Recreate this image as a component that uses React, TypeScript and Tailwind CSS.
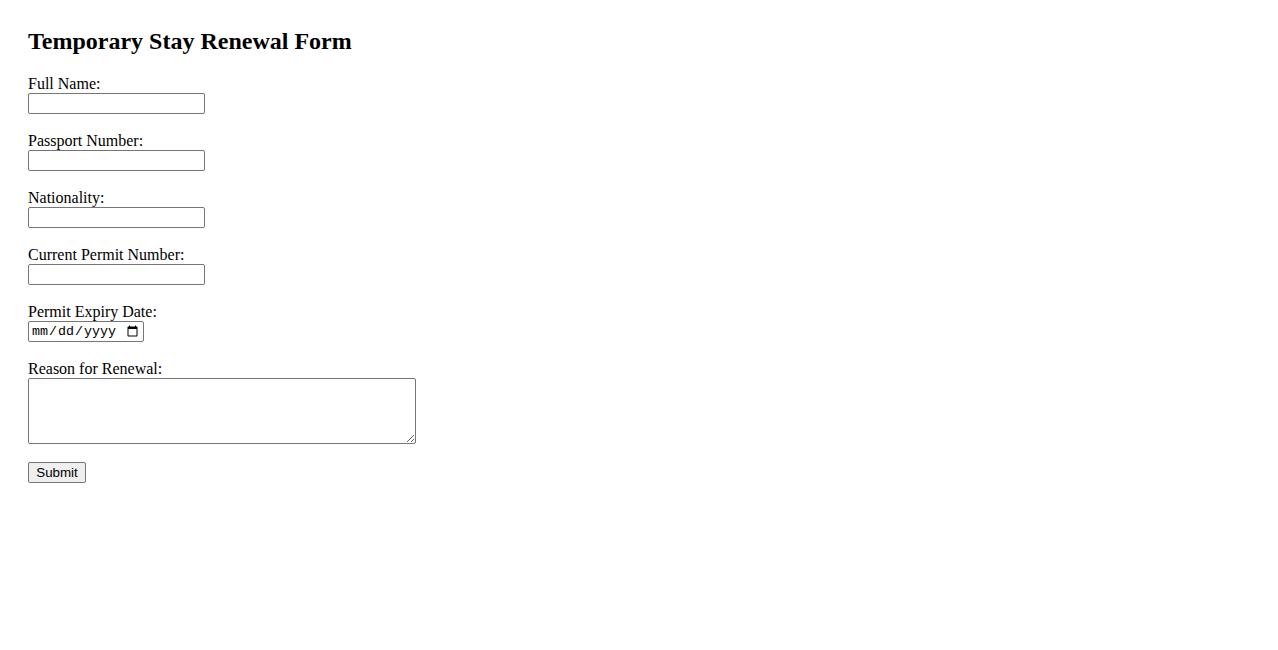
import React, { useState } from "react";

// Plain renewal form, browser-default look
const fields = [
  { id: "fullName", label: "Full Name:" },
  { id: "passport", label: "Passport Number:" },
  { id: "nationality", label: "Nationality:" },
  { id: "permitNumber", label: "Current Permit Number:" },
];

const inputCls =
  "block w-[177px] h-[21px] px-[2px] py-[1px] border border-[#767676] rounded-[2px] bg-white text-[13.33px] text-black [font-family:'Liberation_Sans',Arial,sans-serif] outline-none focus:outline-2 focus:outline-black";

export default function App() {
  const [values, setValues] = useState<Record<string, string>>({});
  const [expiry, setExpiry] = useState("");
  const [reason, setReason] = useState("");

  const update = (id: string, v: string) => setValues((prev) => ({ ...prev, [id]: v }));

  return (
    <div className="min-h-screen bg-white px-[28px] pt-[28px] text-black [font-family:'Liberation_Serif','Times_New_Roman',serif]">
      <h2 className="text-[24px] font-bold leading-[27px]">Temporary Stay Renewal Form</h2>

      <form className="mt-[19px] flex flex-col" onSubmit={(e) => e.preventDefault()}>
        {fields.map((f) => (
          <div key={f.id} className="mb-[17px]">
            <label htmlFor={f.id} className="block text-[16px] leading-[19px]">
              {f.label}
            </label>
            <input
              id={f.id}
              type="text"
              className={inputCls}
              value={values[f.id] ?? ""}
              onChange={(e) => update(f.id, e.target.value)}
            />
          </div>
        ))}

        {/* Expiry date */}
        <div className="mb-[17px]">
          <label htmlFor="expiry" className="block text-[16px] leading-[19px]">
            Permit Expiry Date:
          </label>
          <input
            id="expiry"
            type="date"
            className="block w-[116px] h-[21px] px-[2px] py-0 border border-[#767676] rounded-[2px] bg-white text-[13.33px] text-black [font-family:'Liberation_Mono','Courier_New',monospace] outline-none"
            value={expiry}
            onChange={(e) => setExpiry(e.target.value)}
          />
        </div>

        {/* Reason */}
        <div className="mb-[18px]">
          <label htmlFor="reason" className="block text-[16px] leading-[19px]">
            Reason for Renewal:
          </label>
          <textarea
            id="reason"
            className="block w-[388px] h-[66px] p-[2px] border border-[#767676] rounded-[2px] bg-white text-[13.33px] text-black [font-family:'Liberation_Mono',monospace] outline-none"
            value={reason}
            onChange={(e) => setReason(e.target.value)}
          />
        </div>

        <div className="flex">
          <button
            type="submit"
            className="h-[21px] w-[58px] border border-[#767676] rounded-[2px] bg-[#efefef] text-[13.33px] leading-none text-black [font-family:'Liberation_Sans',Arial,sans-serif] hover:bg-[#e5e5e5]"
          >
            Submit
          </button>
        </div>
      </form>
    </div>
  );
}
